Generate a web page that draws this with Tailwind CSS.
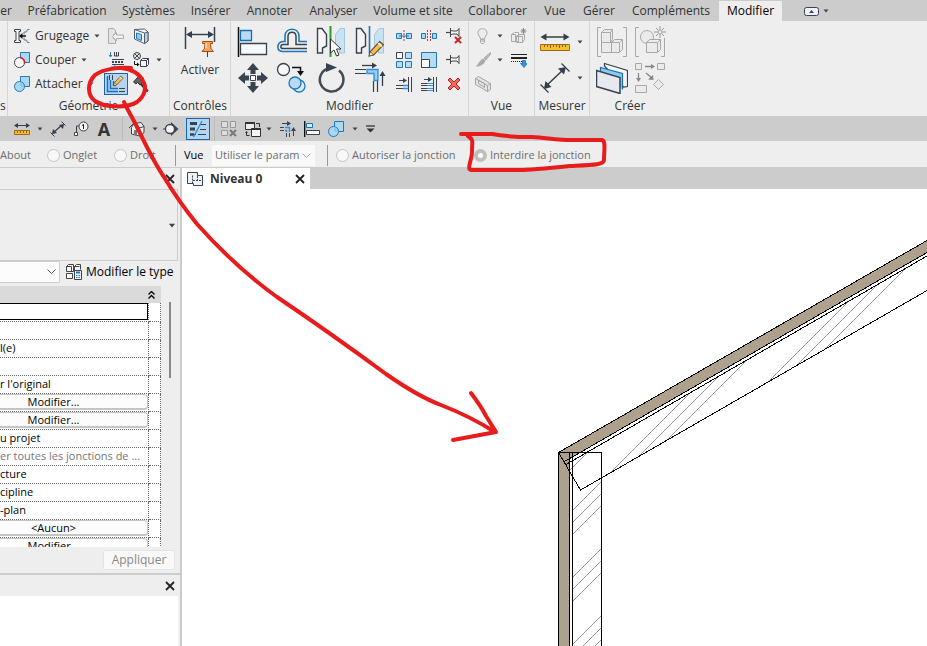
<!DOCTYPE html>
<html lang="fr">
<head>
    <meta charset="UTF-8">
    <meta name="viewport" content="width=device-width, initial-scale=1.0">
    <title>Niveau 0</title>
    <script src="https://cdn.jsdelivr.net/npm/@tailwindcss/browser@4"></script>
</head>
<body class="relative flex h-screen flex-col overflow-hidden bg-[#cccccc] font-['Open_Sans','Noto_Sans',sans-serif] text-xs text-[#333333]">

    <!-- shared symbols -->
    <svg class="hidden">
        <symbol id="caret" viewBox="0 0 6 4"><path d="M0.5 0.5h5L3 3.5z" fill="#444"/></symbol>
        <symbol id="close" viewBox="0 0 10 10"><path d="M1 1l8 8M9 1l-8 8" stroke="#222" stroke-width="1.8"/></symbol>
        <symbol id="pencil" viewBox="0 0 16 16">
            <path d="M1 15l1-4L11 1.500l3.500 3L5.500 14z" fill="#f5bd4c" stroke="#5a4320"/>
            <path d="M1 15l1-4 3.500 3z" fill="#f7ead0" stroke="#333" stroke-width=".6"/>
            <path d="M9.500 3l3.500 3" stroke="#eee" stroke-width="1.500"/>
        </symbol>
        <symbol id="ruler" viewBox="0 0 32 18">
            <path d="M4 4h24" stroke="#333f4b" stroke-width="1.500"/>
            <path d="M1.500 4l6-3.500v7zM30.500 4l-6-3.500v7z" fill="#333f4b"/>
            <path d="M1.500 11.500h29v6h-29z" fill="#f3c229" stroke="#a5671a"/>
            <path d="M5.500 12v2M8.500 12v2M11.500 12v3M14.500 12v2M17.500 12v2M20.500 12v3M23.500 12v2M26.500 12v2" stroke="#8a5a10"/>
        </symbol>
        <symbol id="aligned" viewBox="0 0 32 32">
            <path d="M6 25L25 7" stroke="#333f4b" stroke-width="1.500"/>
            <path d="M5 27l1.500-8 6 6zM27 5l-8 1.500 6 6z" fill="#333f4b"/>
            <path d="M1.500 22.500l8 8M22.500 1.500l8 8" stroke="#333f4b" stroke-width="1.200"/>
        </symbol>
        <symbol id="attach" viewBox="0 0 16 16">
            <path d="M6.500 .5h9v10h-9z" fill="#a9d8f3" stroke="#2277b8"/>
            <circle cx="5.500" cy="10.500" r="5" fill="#a9d8f3" stroke="#2277b8"/>
            <path d="M7 6v4h3.500" fill="none" stroke="#6cb2de" stroke-width=".8"/>
        </symbol>
        <symbol id="align" viewBox="0 0 32 32">
            <path d="M1.500 1v30" stroke="#111" stroke-width="1.500"/>
            <path d="M3.500 4.500h11v10h-11z" fill="#b5dcf4" stroke="#1a6fae" stroke-width="1.300"/>
            <path d="M3.500 17.500h26v11h-26z" fill="#f7f8fa" stroke="#39434f" stroke-width="1.300"/>
        </symbol>
        <symbol id="pin" viewBox="0 0 16 16">
            <path d="M0 7.500h4" stroke="#444" stroke-width="1.200"/>
            <path d="M4.500 3v9M5 5.500l2 .5h4l2-2.500v8l-2-2.500h-4l-2 .5" fill="#f6f6f6" stroke="#444"/>
        </symbol>
        <symbol id="trim" viewBox="0 0 32 32">
            <path d="M8 3.500h12" stroke="#333f4b" stroke-width="1.300"/><path d="M18 .5l5 3-5 3zM25.500 14l3-5 3 5z" fill="#333f4b"/>
            <path d="M28.500 12v12" stroke="#333f4b" stroke-width="1.300"/>
            <path d="M1 7.500h11M1 11.500h11M19.500 19v11M23.500 19v11" stroke="#333f4b" stroke-width="1.200"/>
            <path d="M13 7.500h11v11h-4v-7h-7z" fill="#9bcdf2" stroke="#2f8fe0" stroke-width="1.300"/>
        </symbol>
    </svg>

    <!-- ribbon tabs -->
    <nav class="flex h-[21px] shrink-0 items-end whitespace-nowrap text-center leading-5">
        <a href="#" class="flex w-5 justify-end pr-2">er</a>
        <a href="#" class="w-[94px]">Préfabrication</a>
        <a href="#" class="w-[69px]">Systèmes</a>
        <a href="#" class="w-[55px]">Insérer</a>
        <a href="#" class="w-[63px]">Annoter</a>
        <a href="#" class="w-[65px]">Analyser</a>
        <a href="#" class="w-[94px]">Volume et site</a>
        <a href="#" class="w-[75px]">Collaborer</a>
        <a href="#" class="w-10">Vue</a>
        <a href="#" class="w-12">Gérer</a>
        <a href="#" class="w-24">Compléments</a>
        <a href="#" class="w-[63px] bg-[#eeeeee] text-black">Modifier</a>
        <button class="ml-[22px] flex h-5 items-center gap-1" aria-label="Réduire le ruban">
            <svg class="h-[9px] w-[15px]" viewBox="0 0 15 9"><rect x=".5" y=".5" width="14" height="8" rx="2" fill="#eef3fa" stroke="#39434f"/><path d="M5 6l2.500-3L10 6z" fill="#39434f"/></svg>
            <svg class="h-1 w-[6px]"><use href="#caret"/></svg>
        </button>
    </nav>

    <!-- ribbon panels -->
    <div class="flex h-[95px] shrink-0 bg-[#eeeeee] text-center leading-5">
        <section class="flex w-2 flex-col justify-end border-r border-[#d6d6d6]"><h2 class="text-left">s</h2></section>

        <section class="flex w-[162px] flex-col border-r border-[#d6d6d6]">
            <div class="flex h-[75px] pt-[3px]">
                <div class="grid w-24 grid-rows-3 pl-[6px]">
                    <button class="flex items-center gap-[5px]">
                        <svg class="size-4" viewBox="0 0 16 16" fill="none"><path d="M.5 1.500h6v2h-1.500v9h1.500v2h-6v-2H2v-9H.5z" fill="#f8f8f8" stroke="#39434f"/><path d="M6 8h6" stroke="#111" stroke-width="1.500"/><path d="M5 8l3.500-3v6z" fill="#111"/><path d="M15.500 1.500h-2l-1 2.500H10v2.500M15.500 14.500h-2l-1-2.500H10V9.500" stroke="#6c7680"/></svg>
                        <span>Grugeage</span>
                        <svg class="h-1 w-[6px]"><use href="#caret"/></svg>
                    </button>
                    <button class="flex items-center gap-[5px]">
                        <svg class="size-4" viewBox="0 0 16 16"><path d="M6.500 .5h9v10h-9z" fill="#a9d8f3" stroke="#2277b8"/><circle cx="5.500" cy="10.500" r="5" fill="#fff" stroke="#39434f"/><path d="M6 5.500a5 5 0 0 1 4.500 6" fill="none" stroke="#e01b1b" stroke-width="1.500"/></svg>
                        <span>Couper</span>
                        <svg class="h-1 w-[6px]"><use href="#caret"/></svg>
                    </button>
                    <button class="flex items-center gap-[5px]">
                        <svg class="size-4"><use href="#attach"/></svg>
                        <span>Attacher</span>
                        <svg class="h-1 w-[6px]"><use href="#caret"/></svg>
                    </button>
                </div>
                <div class="grid w-6 grid-rows-3 place-items-center">
                    <button aria-label="Délier"><svg class="size-4" viewBox="0 0 16 16" fill="#e4e4e4" stroke="#aaa"><path d="M.5 .5h5l2 2v3l-2 1v4l2 1v4h-7z"/><path d="M4.500 8.500l4-4v2.500h7v3.500h-7v2.500z" fill="#f2f2f2"/></svg></button>
                    <button aria-label="Toitures"><svg class="size-4" viewBox="0 0 16 16" fill="none"><path d="M2.500 0v4M1 3l1.500 2L4 3" stroke="#2277b8"/><path d="M6.500 0v4h4V0M8.500 0v4" stroke="#39434f"/><path d="M4 7.500h12M4 12.500h12" stroke="#39434f"/><path d="M4 10h12" stroke="#39434f" stroke-width="2" stroke-dasharray="2 1"/><path d="M3 15h5M6 13.500L8.500 15 6 16" stroke="#2277b8"/></svg></button>
                    <button class="grid h-[22px] w-6 place-items-center border border-[#1565b0] bg-[#b4d4f2]" aria-label="Jonctions de murs"><svg class="h-[18px] w-5" viewBox="0 0 20 18" fill="none"><path d="M3.500 0v5M6.500 0v5" stroke="#39434f"/><path d="M1.500 1v15.500H12M4.500 5v8.500H12M7.500 6v4.500H10" stroke="#1d6fb5" stroke-width="1.500"/><path d="M13 13.500h6M13 16.500h6" stroke="#39434f"/><g transform="translate(7 0) scale(.7)"><use href="#pencil" width="16" height="16"/></g></svg></button>
                </div>
                <div class="grid w-[26px] grid-rows-3 place-items-center">
                    <button aria-label="Scinder la face"><svg class="size-4" viewBox="0 0 16 16"><path d="M1.500 1.500l10-.5 3.500 3v9l-3.500 2.500L1.500 11z" fill="#f4f7fa" stroke="#53616e"/><path d="M11.500 5l3.500-1v9l-3.500 2.500zM1.500 1.500l10 3.500" fill="#c6ccd3" stroke="#53616e"/><path d="M3.500 5l5 1.500v6l-5-2z" fill="#8ccaf0" stroke="#2277b8"/></svg></button>
                    <button aria-label="Démolir"><svg class="size-4" viewBox="0 0 16 16"><circle cx="4" cy="4" r="3.500" fill="#e8e8e8" stroke="#39434f"/><path d="M1.500 1.500l5 5M6.500 1.500l-5 5" stroke="#39434f"/><path d="M1.500 9v3.500H5" fill="none" stroke="#111"/><path d="M4 10.500l2.500 2-2.500 2z" fill="#111"/><path d="M7.500 8.500l2-2h6v6l-2 2h-6zM7.500 8.500h6v6M13.500 8.500l2-2" fill="#f8f8f8" stroke="#39434f"/></svg></button>
                    <button aria-label="Marteau"><svg class="size-4" viewBox="0 0 16 16"><path d="M7 7l7.500 8" stroke="#333" stroke-width="2.500"/><path d="M13 14l2 1.500" stroke="#a22" stroke-width="2"/><path d="M.5 6L5 1l5.500 1L9 4l1 2-3 3-2.500-2.500L3 8z" fill="#5a636c" stroke="#333"/></svg></button>
                </div>
                <div class="grid w-2 grid-rows-3 items-center justify-end"><svg class="row-start-2 h-1 w-[6px]"><use href="#caret"/></svg></div>
            </div>
            <h2>Géométrie</h2>
        </section>

        <section class="flex w-[61px] flex-col border-r border-[#d6d6d6]">
            <button class="flex h-[75px] flex-col items-center gap-[3px] pt-1">
                <svg class="size-8" viewBox="0 0 32 32"><path d="M1.500 2v22M30.500 2v15" stroke="#39434f" stroke-width="1.500"/><path d="M4 9.500h24" stroke="#39434f" stroke-width="1.500"/><path d="M2 9.500l6-3.500v7zM30 9.500L24 6v7z" fill="#333f4b"/><path d="M23.500 27v5" stroke="#39434f"/><path d="M18.500 16.500h10v2h-2l.5 5 2.500 3h-11.500l2.500-3 .5-5h-2.500z" fill="#f7a55b" stroke="#a84a10"/><path d="M22 18v5" stroke="#fff"/></svg>
                <span>Activer</span>
            </button>
            <h2 class="-mx-1 whitespace-nowrap">Contrôles</h2>
        </section>

        <section class="flex w-[238px] flex-col border-r border-[#d6d6d6]">
            <div class="flex h-[75px] gap-[2px] pt-[3px] pl-[2px]">
                <div class="grid w-[156px] grid-cols-4 grid-rows-2 place-items-center">
                    <button aria-label="Aligner"><svg class="size-8"><use href="#align"/></svg></button>
                    <button aria-label="Décaler"><svg class="size-8" viewBox="0 0 32 32" fill="none"><path d="M31 25.500H6.500C0 25 .5 16 7 15.500h2V10C9.500 1 22.500 1 23 10v5.500h8" stroke="#2277b8" stroke-width="1.600"/><path d="M31 22.500H6.500c-2.500-.5-2-4 .5-4h5V10c.5-5 7.500-5 8 0v8.500h11" stroke="#39434f" stroke-width="1.500"/></svg></button>
                    <button aria-label="Symétrie - Choisir l'axe"><svg class="size-8" viewBox="0 0 32 32"><path d="M2.500 2.500H7l4.500 6V20l-4 2v5h-5z" fill="#f5f5f5" stroke="#39434f" stroke-width="1.400"/><path d="M29.500 2.500H25l-4.500 6V20l4 2v5h5z" fill="#c7e3f5" stroke="#9fc6e0"/><path d="M15.500 0v31" stroke="#22a022" stroke-width="2"/><path d="M15.500 13v14l3.500-3 2.500 6 2.500-1-2.500-6h4.500z" fill="#fff" stroke="#333"/></svg></button>
                    <button aria-label="Symétrie - Dessiner l'axe"><svg class="size-8" viewBox="0 0 32 32"><path d="M2.500 2.500H7l4.500 6V20l-4 2v5h-5z" fill="#f5f5f5" stroke="#39434f" stroke-width="1.400"/><path d="M29.500 2.500H25l-4.500 6V20l4 2v5h5z" fill="#c7e3f5" stroke="#9fc6e0"/><path d="M15.500 0v28" stroke="#2277b8" stroke-width="1.600"/><use href="#pencil" x="14" y="14" width="17" height="17"/></svg></button>
                    <button aria-label="Déplacer"><svg class="size-8" viewBox="0 0 32 32" fill="#39434f"><path d="M16 1l6 7h-3.500v4h-5V8H10zM16 31l6-7h-3.500v-4h-5v4H10zM1 16l7-6v3.500h4v5H8V22zM31 16l-7-6v3.500h-4v5h4V22z"/><path d="M13.500 13.500h5v5h-5z" fill="#fff" stroke="#39434f"/></svg></button>
                    <button aria-label="Copier"><svg class="size-8" viewBox="0 0 32 32"><circle cx="7.500" cy="7.500" r="6" fill="#f7f7f7" stroke="#39434f" stroke-width="1.300"/><path d="M16 5.500h8.500V10" fill="none" stroke="#111" stroke-width="1.500"/><path d="M21 9h7l-3.500 5z" fill="#111"/><circle cx="23" cy="24" r="6" fill="#d8edf9" stroke="#2277b8" stroke-width="1.300"/><circle cx="19" cy="21" r="6" fill="#b5dcf4" stroke="#2277b8" stroke-width="1.300"/></svg></button>
                    <button aria-label="Rotation"><svg class="size-8" viewBox="0 0 32 32"><path d="M24 8.500A11.800 11.800 0 1 1 13 6.500" fill="none" stroke="#444b52" stroke-width="2.500"/><path d="M11 1l11 4.500L11 10z" fill="#39434f"/></svg></button>
                    <button aria-label="Ajuster"><svg class="size-8"><use href="#trim"/></svg></button>
                </div>
                <div class="grid w-[75px] grid-cols-3 grid-rows-3 place-items-center">
                    <button aria-label="Scinder"><svg class="size-4" viewBox="0 0 16 16"><path d="M.5 5.500h5v5h-5zM10.500 5.500h5v5h-5z" fill="#a9d8f3" stroke="#2277b8"/><path d="M3 8h10" stroke="#2277b8"/><path d="M8 2v12" stroke="#c43333" stroke-dasharray="2 1"/></svg></button>
                    <button aria-label="Scinder avec espace"><svg class="size-4" viewBox="0 0 16 16"><path d="M.5 5.500h4v5h-4zM11.500 5.500h4v5h-4z" fill="#a9d8f3" stroke="#2277b8"/><path d="M6.500 2v12M9.500 2v12" stroke="#c43333" stroke-dasharray="2 1"/></svg></button>
                    <button aria-label="Déverrouiller"><svg class="size-4" viewBox="0 0 16 16"><use href="#pin" y="-3" width="16" height="16"/><path d="M9 9l6 6M15 9l-6 6" stroke="#c92323" stroke-width="2"/></svg></button>
                    <button aria-label="Réseau"><svg class="size-4" viewBox="0 0 16 16"><path d="M.5 .5h6v6h-6z" fill="#f8f8f8" stroke="#39434f"/><path d="M9.500 .5h6v6h-6zM.5 9.500h6v6h-6zM9.500 9.500h6v6h-6z" fill="#b5dcf4" stroke="#2277b8"/></svg></button>
                    <button aria-label="Echelle"><svg class="size-4" viewBox="0 0 16 16"><path d="M.5 .5h15v15H.5z" fill="#b5dcf4" stroke="#2277b8"/><path d="M.5 7.500h8v8h-8z" fill="#f8f8f8" stroke="#39434f"/></svg></button>
                    <button aria-label="Verrouiller"><svg class="size-4"><use href="#pin"/></svg></button>
                    <button aria-label="Ajuster un élément"><svg class="size-4" viewBox="0 0 16 16"><path d="M3 4.500h6" stroke="#39434f"/><path d="M7 2l4 2.500L7 7z" fill="#39434f"/><path d="M0 9.500h7M0 12.500h7M12.500 1v15M15.500 1v15" stroke="#39434f"/><path d="M7 9.500h5M7 12.500h5" stroke="#2f8fe0" stroke-width="1.500"/></svg></button>
                    <button aria-label="Ajuster plusieurs éléments"><svg class="size-4" viewBox="0 0 16 16"><path d="M3 3.500h6" stroke="#39434f"/><path d="M7 1l4 2.500L7 6z" fill="#39434f"/><path d="M0 7.500h6M0 9.500h6M0 12.500h6M0 14.500h6M12.500 1v15M15.500 1v15" stroke="#39434f"/><path d="M6 7.500h6M6 9.500h6M6 12.500h6M6 14.500h6" stroke="#2f8fe0"/></svg></button>
                    <button aria-label="Supprimer"><svg class="size-4" viewBox="0 0 16 16"><path d="M2 4l2-2 4 4 4-4 2 2-4 4 4 4-2 2-4-4-4 4-2-2 4-4z" fill="#f26a5e" stroke="#b51f1f"/></svg></button>
                </div>
            </div>
            <h2>Modifier</h2>
        </section>

        <section class="flex w-[66px] flex-col border-r border-[#d6d6d6]">
            <div class="grid h-[75px] grid-cols-[28px_6px_31px] grid-rows-3 place-items-center pt-[3px]">
                <button aria-label="Masquer"><svg class="size-4" viewBox="0 0 16 16" fill="#ececec" stroke="#aaa"><path d="M5.500 11C5 8 3.500 8 3 5.500 2.500-1 12.500-1 12 5.500 11.500 8 10 8 9.500 11zM5.500 11.500h4v3l-1 1h-2l-1-1zM6 13h3"/></svg></button>
                <svg class="h-1 w-[6px]"><use href="#caret"/></svg>
                <button aria-label="Zone d'affichage"><svg class="size-4" viewBox="0 0 16 16" fill="#ececec" stroke="#aaa"><path d="M.5 6.500l3-2h4v9h-7zM.5 6.500h4v7M5.500 8.500l2-2h6v5l-2 3h-6zM5.500 8.500h6v6"/><path d="M12.500 0v6M9.500 3h6M10.500 1l4 4M14.500 1l-4 4" stroke="#888"/></svg></button>
                <button aria-label="Remplacer"><svg class="size-4" viewBox="0 0 16 16"><path d="M15.500 .5L9 6l2 2 4.500-6z" fill="#bbb" stroke="#aaa"/><path d="M8.500 6.500l2 2C9 13 4 15 .5 14.500c3-1.500 3-6 8-8z" fill="#aaa"/></svg></button>
                <svg class="h-1 w-[6px]"><use href="#caret"/></svg>
                <button aria-label="Lignes"><svg class="size-4" viewBox="0 0 16 16"><path d="M0 2.500h16" stroke="#222"/><path d="M0 6h16" stroke="#222" stroke-width="2"/><path d="M0 9.500h11" stroke="#222" stroke-dasharray="1 1"/><path d="M11.500 8.500h3v3h2L13 15.500l-3.500-4h2z" fill="#2e95ec" stroke="#1565b0" stroke-width=".7"/></svg></button>
                <button aria-label="Boîte de sélection"><svg class="size-4" viewBox="0 0 16 16" fill="#e4e4e4" stroke="#a4a4a4"><path d="M.5 2.500L3.500 .5l12 7v6l-3 2-12-7zM.5 2.500l12 7v6M12.500 9.500l3-2M3.500 4.500v3l6 4v-4z"/></svg></button>
            </div>
            <h2>Vue</h2>
        </section>

        <section class="flex w-[55px] flex-col border-r border-[#d6d6d6]">
            <div class="grid h-[75px] grid-cols-[40px_10px] grid-rows-2 place-items-center pt-[3px]">
                <button aria-label="Mesurer"><svg class="h-[18px] w-8"><use href="#ruler"/></svg></button>
                <svg class="h-1 w-[6px]"><use href="#caret"/></svg>
                <button aria-label="Cote alignée"><svg class="size-8"><use href="#aligned"/></svg></button>
                <svg class="h-1 w-[6px]"><use href="#caret"/></svg>
            </div>
            <h2>Mesurer</h2>
        </section>

        <section class="flex w-20 flex-col">
            <div class="grid h-[75px] grid-cols-[43px_34px] grid-rows-2 place-items-center pt-[3px]">
                <button aria-label="Créer un assemblage"><svg class="size-8" viewBox="0 0 32 32" fill="#ebebeb" stroke="#a8a8a8"><path d="M5 1.500H1.500v29H5M27 1.500h3.500v29H27" fill="none"/><path d="M5.500 6.500l3-3h8v10l-2 3h-9zM5.500 6.500h9v10M14.500 6.500l2-3M5.500 16.500h10v10h-10zM15.500 16.500l3-3h8v10l-3 3h-8zM15.500 16.500h8v10M23.500 16.500l3-3"/></svg></button>
                <button aria-label="Créer un groupe"><svg class="size-8" viewBox="0 0 32 32" fill="#ebebeb" stroke="#a8a8a8"><path d="M5 1.500H1.500v29H5M27 30.500h3.500V12" fill="none"/><circle cx="13" cy="11" r="6.500"/><path d="M12.500 16.500l3-3h11v10l-3 3h-11zM12.500 16.500h11v10M23.500 16.500l3-3"/><path d="M26 0v12M20 6h12M22 2l8 8M30 2l-8 8" stroke="#999"/><circle cx="26" cy="6" r="2"/></svg></button>
                <button aria-label="Créer des pièces"><svg class="size-8" viewBox="0 0 32 32" stroke-width="1.200"><path d="M8.500 4V1.500l23 7v16l-4 .5z" fill="#f4f5f8" stroke="#39434f"/><path d="M4.500 10V5.500l22 6v16" fill="#8ccaf0" stroke="#1a6fae"/><path d="M.5 8.500l23.500 7v16l-23.500-7z" fill="#e6e9ef" stroke="#39434f" stroke-width="1.500"/></svg></button>
                <button aria-label="Créer similaire"><svg class="size-8" viewBox="0 0 32 32" fill="#ebebeb" stroke="#a8a8a8"><path d="M1.500 1.500h6v6h-6zM23.500 1.500h7v6h-7zM1.500 23.500h11v7h-11zM24.500 17.500l5 5-5 5-5-5z"/><path d="M11 4.500h8M4.500 11v6M12 11l6 5" stroke="#888" stroke-width="1.300"/><path d="M17 2l4 2.500-4 2.500zM2 16l2.500 4L7 16zM19 13l.5 5-5.500-.5z" fill="#888" stroke="none"/></svg></button>
            </div>
            <h2>Créer</h2>
        </section>
    </div>

    <!-- quick access toolbar -->
    <div class="flex h-[25px] shrink-0 items-center">
        <div class="flex h-full w-[123px] items-center gap-[7px] border-r border-[#bbbbbb] pl-[14px]">
            <button aria-label="Mesurer"><svg class="h-3 w-4" viewBox="0 0 16 12"><path d="M2 2.500h12" stroke="#333f4b"/><path d="M0 2.500L4 0v5zM16 2.500L12 0v5z" fill="#333f4b"/><path d="M.5 7.500h15v4H.5z" fill="#f3c229" stroke="#a5671a"/><path d="M3.500 8v2M6.500 8v2M9.500 8v2M12.500 8v2" stroke="#8a5a10"/></svg></button>
            <svg class="h-1 w-[6px]"><use href="#caret"/></svg>
            <button aria-label="Cote alignée"><svg class="size-4" viewBox="0 0 16 16"><path d="M3 12L12 4" stroke="#333f4b" stroke-width="1.200"/><path d="M2 13l1-5 4 4zM14 3L9 4l4 4z" fill="#333f4b"/><path d="M.5 11.500l4 4M11.500 .5l4 4" stroke="#333f4b"/></svg></button>
            <button aria-label="Etiquette"><svg class="size-4" viewBox="0 0 16 16"><path d="M6 5H3.500v6" fill="none" stroke="#39434f"/><circle cx="10.500" cy="5.500" r="4.500" fill="#f6f6f6" stroke="#39434f"/><path d="M9 4.500l1.500-1v4.500" fill="none" stroke="#222"/><path d="M1.500 11.500h3v3h-3z" fill="#fff" stroke="#39434f"/></svg></button>
            <button class="w-4 text-lg font-bold leading-6">A</button>
        </div>
        <div class="flex h-full w-[92px] items-center border-r border-[#bbbbbb] pl-[6px]">
            <button aria-label="Vue 3D"><svg class="size-4" viewBox="0 0 16 16"><path d="M2.500 6.500L5 2.500l7-1 3 4v6l-4 3.500-8.500-2z" fill="#f2f2f2" stroke="#39434f"/><path d="M0 7l5-5 6 5M10.500 7v8M10.500 7L15 5.500" fill="none" stroke="#39434f"/><path d="M5 9h3v5H5z" fill="#777"/></svg></button>
            <svg class="mr-[5px] ml-[7px] h-1 w-[6px]"><use href="#caret"/></svg>
            <button aria-label="Coupe"><svg class="size-4" viewBox="0 0 16 16"><path d="M8 1l7.500 7L8 15z" fill="#39434f"/><circle cx="7" cy="8" r="4.500" fill="#f2f2f2" stroke="#39434f" stroke-width="1.300"/><path d="M0 8h2.500" stroke="#39434f"/></svg></button>
            <button class="ml-[7px] grid h-[22px] w-6 place-items-center border border-[#1565b0] bg-[#b4d4f2]" aria-label="Lignes fines"><svg class="h-[18px] w-5" viewBox="0 0 20 18"><path d="M2 4.500h6M12 4.500h6M2 14.500h6M10 14.500h8" stroke="#39434f"/><path d="M2 3.500h7M2 9h5" stroke="#39434f" stroke-width="3"/><path d="M12 9.500h6" stroke="#39434f"/><path d="M2 14.500h4" stroke="#39434f" stroke-width="2.500"/><path d="M14 1L5.500 17" stroke="#2f8fe0" stroke-width="1.300"/></svg></button>
        </div>
        <div class="flex items-center gap-2 pl-[6px]">
            <button aria-label="Fermer les vues inactives"><svg class="size-4" viewBox="0 0 16 16" fill="#ddd" stroke="#999"><path d="M.5 .5h6v6h-6zM9.500 .5h5v6h-5zM.5 9.500h6v5h-6z"/><path d="M9 9l6 6M15 9l-6 6" stroke="#777" stroke-width="2"/></svg></button>
            <button aria-label="Changer de fenêtre"><svg class="size-4" viewBox="0 0 16 16"><path d="M.5 1.500h9v7h-9z" fill="#eee" stroke="#333"/><path d="M.5 2h9" stroke="#333" stroke-width="2"/><path d="M6.500 7.500h9v8h-9z" fill="#f6f6f6" stroke="#333"/><path d="M6.500 8h9" stroke="#333" stroke-width="2"/><path d="M11 2.500h3.500V6M1.500 11v3.500h3" fill="none" stroke="#333"/><path d="M0 12l1.500-2L3 12z" fill="#333"/></svg></button>
            <svg class="-ml-[3px] h-1 w-[6px]"><use href="#caret"/></svg>
            <button aria-label="Ajuster"><svg class="size-4" viewBox="0 0 16 16"><path d="M2 2.500h6" stroke="#39434f"/><path d="M7 0l4 2.500L7 5zM11 10l2.500-4 2.500 4z" fill="#39434f"/><path d="M13.500 9v6M0 6.500h4M0 9.500h4M6.500 12v4M9.500 12v4" stroke="#39434f"/><path d="M5 6.500h4.500V11M5 9.500h1.500V11" fill="none" stroke="#2f8fe0" stroke-width="1.500"/></svg></button>
            <button aria-label="Aligner"><svg class="size-4" viewBox="0 0 16 16"><path d="M.7 0v16" stroke="#111" stroke-width="1.400"/><path d="M2.500 2.500h6v4h-6z" fill="#d5ebf9" stroke="#1a6fae"/><path d="M2.500 9.500h13v4h-13z" fill="#f7f8fa" stroke="#39434f"/></svg></button>
            <button aria-label="Attacher"><svg class="size-4"><use href="#attach"/></svg></button>
            <svg class="h-1 w-[6px]"><use href="#caret"/></svg>
            <button aria-label="Personnaliser"><svg class="h-2 w-[9px]" viewBox="0 0 9 8"><path d="M0 1h9" stroke="#333" stroke-width="1.300"/><path d="M.5 3.500h8l-4 4z" fill="#333"/></svg></button>
        </div>
    </div>

    <!-- options bar -->
    <form class="flex h-[26px] shrink-0 items-center whitespace-nowrap bg-[#eeeeee] pt-[2px] text-[11px] text-[#6d6d6d]">
        <span class="w-[47px]">About</span>
        <label class="flex w-[67px] items-center gap-[3px]"><input type="radio" name="end" class="size-[13px] appearance-none rounded-full border border-[#c4c4c4] bg-[#f8f8f8]">Onglet</label>
        <label class="flex w-[61px] items-center gap-[3px]"><input type="radio" name="end" class="size-[13px] appearance-none rounded-full border border-[#c4c4c4] bg-[#f8f8f8]">Droit</label>
        <div class="flex h-[21px] items-center border-l border-[#999999] pl-2">
            <label for="display" class="w-7 text-black">Vue</label>
            <div class="relative">
                <select id="display" class="h-[21px] w-[103px] appearance-none overflow-hidden bg-[#f9f9f9] pr-4 pl-[3px] text-[#6d6d6d]"><option>Utiliser le param</option></select>
                <svg class="pointer-events-none absolute top-2 right-1 h-[5px] w-[9px]" viewBox="0 0 9 5"><path d="M.5 .5l4 4 4-4" fill="none" stroke="#aaa"/></svg>
            </div>
        </div>
        <div class="ml-3 flex h-[21px] items-center border-l border-[#999999] pl-2">
            <label class="flex w-[138px] items-center gap-[3px]"><input type="radio" name="join" class="size-[13px] appearance-none rounded-full border border-[#c4c4c4] bg-[#f8f8f8]">Autoriser la jonction</label>
            <label class="flex items-center gap-[3px]"><input type="radio" name="join" checked class="size-[13px] appearance-none rounded-full border-4 border-[#bfbfbf] bg-white">Interdire la jonction</label>
        </div>
    </form>

    <main class="flex min-h-0 flex-1 pt-px">
        <!-- properties palette -->
        <aside class="flex w-[182px] shrink-0 flex-col border-r-2 border-[#cccccc] bg-[#eeeeee] text-black">
            <header class="flex h-[21px] shrink-0 items-center justify-end pr-[5px]"><button aria-label="Fermer"><svg class="size-[10px]"><use href="#close"/></svg></button></header>
            <div class="mr-[2px] flex h-[72px] shrink-0 items-center justify-end border-y border-r border-[#cccccc] pr-[1px]"><svg class="h-[5px] w-2"><use href="#caret"/></svg></div>
            <div class="flex h-[25px] shrink-0 items-start gap-[6px] whitespace-nowrap">
                <div class="relative">
                    <select aria-label="Type" class="block h-[22px] w-[60px] appearance-none rounded-r-xs border border-l-0 border-[#cccccc] bg-[#fcfcfc]"><option></option></select>
                    <svg class="pointer-events-none absolute top-2 right-1 h-[5px] w-[9px]" viewBox="0 0 9 5"><path d="M.5 .5l4 4 4-4" fill="none" stroke="#555"/></svg>
                </div>
                <button class="flex h-[22px] items-center gap-1">
                    <svg class="size-4" viewBox="0 0 16 16"><path d="M.5 2.500l2-2h5v7h-7zM.5 2.500h5v5M8.500 2.500l2-2h4v5M8.500 7V2.500h5M.5 9.500h6v5h-6z" fill="#f8f8f8" stroke="#444"/><path d="M8.500 6.500h7v9h-7z" fill="#f4f8fc" stroke="#39434f"/><path d="M10 8.500h4" stroke="#2277b8" stroke-width="2"/><path d="M10 11.500h1.500M12.500 11.500H14M10 13.500h1.500M12.500 13.500H14" stroke="#2277b8"/></svg>
                    Modifier le type
                </button>
            </div>
            <div class="flex min-h-0 flex-1">
                <div class="w-[161px] overflow-hidden">
                    <div class="flex h-[17px] items-center justify-end bg-[#dadada] pr-[6px]"><svg class="h-2 w-[7px]" viewBox="0 0 7 8"><path d="M.5 3.500l3-3 3 3M.5 7.500l3-3 3 3" fill="none" stroke="#000" stroke-width="1.300"/></svg></div>
                    <table class="w-full table-fixed border-collapse whitespace-nowrap bg-white text-[11px] leading-4 [&_td]:h-[18px] [&_td]:border-r [&_td]:border-b [&_td]:border-dotted [&_td]:border-[#666666] [&_td]:p-0">
                        <colgroup><col><col class="w-3"></colgroup>
                        <tr><td><input aria-label="Valeur" class="block h-[17px] w-full border border-l-0 border-black bg-white"></td><td></td></tr>
                        <tr><td></td><td></td></tr>
                        <tr><td>l(e)</td><td></td></tr>
                        <tr><td></td><td></td></tr>
                        <tr><td>r l'original</td><td></td></tr>
                        <tr><td><button class="block h-4 w-full rounded-r-sm border border-b-2 border-l-0 border-[#c4c4c4] bg-[#fcfcfc] pr-10 leading-3">Modifier...</button></td><td></td></tr>
                        <tr><td><button class="block h-4 w-full rounded-r-sm border border-b-2 border-l-0 border-[#c4c4c4] bg-[#fcfcfc] pr-10 leading-3">Modifier...</button></td><td></td></tr>
                        <tr><td>u projet</td><td></td></tr>
                        <tr><td class="text-[#777777]">er toutes les jonctions de ...</td><td></td></tr>
                        <tr><td>cture</td><td></td></tr>
                        <tr><td>cipline</td><td></td></tr>
                        <tr><td>-plan</td><td></td></tr>
                        <tr><td><button class="block h-4 w-full rounded-r-sm border border-b-2 border-l-0 border-[#c4c4c4] bg-[#fcfcfc] pr-10 leading-3">&lt;Aucun&gt;</button></td><td></td></tr>
                        <tr><td><button class="block h-4 w-full rounded-r-sm border border-b-2 border-l-0 border-[#c4c4c4] bg-[#fcfcfc] pr-10 leading-3">Modifier...</button></td><td></td></tr>
                    </table>
                </div>
                <div class="flex-1 pt-4 pl-2"><div class="h-[76px] w-[2px] bg-[#888888]"></div></div>
            </div>
            <div class="flex h-[26px] shrink-0 justify-end pt-[3px] pr-[5px]">
                <button class="h-5 w-[72px] rounded-xs border border-[#e4e4e4] bg-[#f9f9f9] leading-4 text-[#888888]">Appliquer</button>
            </div>
            <section class="h-[73px] shrink-0 border-t-2 border-[#cccccc]">
                <header class="flex h-[21px] items-center justify-end pr-[5px]"><button aria-label="Fermer"><svg class="size-[10px]"><use href="#close"/></svg></button></header>
                <div class="mr-[2px] h-[50px] bg-white"></div>
            </section>
        </aside>

        <!-- drawing view -->
        <div class="flex min-w-0 flex-1 flex-col">
            <div class="flex h-[21px] shrink-0">
                <div class="flex w-32 items-center bg-white pr-[5px] pl-[5px]">
                    <svg class="size-4" viewBox="0 0 16 16"><path d="M.5 1.500h10v3h5v10h-9v-2h-6z" fill="#eef1f5" stroke="#39434f"/><path d="M5.500 4.500v8M10.500 5v4M6 9.500h9" fill="none" stroke="#39434f" stroke-dasharray="2 1"/></svg>
                    <span class="flex-1 pl-[7px] font-bold">Niveau 0</span>
                    <button aria-label="Fermer la vue"><svg class="size-[10px]"><use href="#close"/></svg></button>
                </div>
            </div>
            <div class="min-h-0 flex-1 bg-white">
                <svg class="h-full w-full" viewBox="182 189 745 457" preserveAspectRatio="xMinYMin slice" fill="none" shape-rendering="crispEdges">
                    <clipPath id="slopedCore"><path d="M566 464.500L927 256v34.500L580.500 490z"/></clipPath>
                    <clipPath id="uprightCore"><path d="M573 453h28v193h-28z"/></clipPath>
                    <path d="M559 453h10v193h-10z" fill="#ada08d"/>
                    <path d="M559 452.500L927 240.500v12L564.500 461.500z" fill="#ada08d"/>
                    <g stroke="#999999">
                        <path clip-path="url(#slopedCore)" d="M540 500l100-100M583 500l200-200M595 500l200-200M607 500l200-200M650 500l300-300M662 500l300-300M674 500l300-300"/>
                        <path clip-path="url(#uprightCore)" d="M563 520l50-50M563 532l50-50M563 544l50-50M563 587l50-50M563 599l50-50M563 611l50-50M563 654l50-50M563 666l50-50M563 678l50-50"/>
                    </g>
                    <g stroke="#000000">
                        <path d="M558.500 646V452.500h43V646M569.500 452v194M572.500 452v194"/>
                        <path d="M558.500 452.500L927 240.500M564.500 461.500L927 252.500M566 464.500L927 256M558.500 452.500l22 37.500L927 290.500"/>
                    </g>
                </svg>
            </div>
        </div>
    </main>

    <!-- red pen marks over the window -->
    <svg class="pointer-events-none absolute top-0 left-0 h-[646px] w-[927px]" viewBox="0 0 927 646" fill="none" stroke="#e81c1c" stroke-width="4" stroke-linecap="round" stroke-linejoin="round">
        <path d="M131 68c-12-1-28 1-36 7-8 8-8 20 0 26 10 7 33 7 42 1 8-6 10-15 6-21-4-8-12-12-22-13"/>
        <path d="M124 102c4 9 8 15 12 23 9 18 17 36 28 52 12 20 20 31 33 47 25 28 48 50 80 73 43 29 75 52 109 77 20 14 39 25 55 31 18 7 38 17 54 27"/>
        <path d="M471 393c6 8 11 15 15 23l10 16-43 8"/>
        <path d="M461 134h31c15 3 28 3 40 3 16 1 25 3 40 3h30c4 1 2 10 2 20 0 5-11 5-34 6-20 2-40 4-50 4h-49c-5-1 2-12 1-20 0-8 2-10-4-14"/>
    </svg>
</body>
</html>
